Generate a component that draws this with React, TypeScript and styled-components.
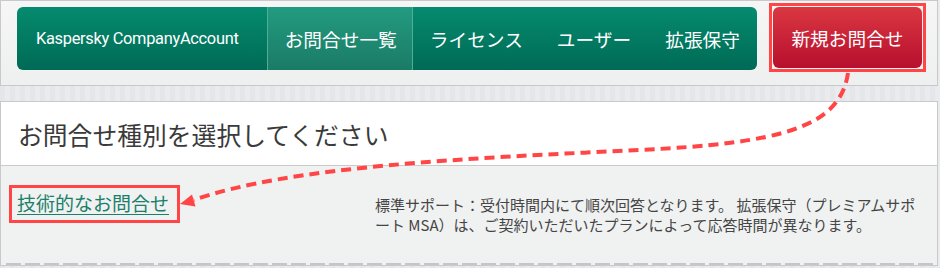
import * as React from 'react'
import styled, { createGlobalStyle } from 'styled-components'

const GlobalStyle = createGlobalStyle`
    html, body {
        margin: 0;
        padding: 0;
        background: #e8e9ec;
    }
    body {
        font-family: "Noto Sans CJK JP", "Noto Sans", sans-serif;
    }
`

const Page = styled.div`
    position: relative;
    width: 940px;
    height: 268px;
    overflow: hidden;
    background: repeating-linear-gradient(90deg, #e5e6ea 0 5px, #eaebee 5px 10px);
`

const HeaderPanel = styled.header`
    box-sizing: border-box;
    width: 938px;
    height: 86px;
    display: flex;
    align-items: flex-start;
    gap: 12px;
    padding: 6px 10px 0 16px;
    border: 1px solid #c9c9cb;
    background: linear-gradient(#f6f6f6, #eeefef);
`

const NavBar = styled.nav`
    display: flex;
    width: 740px;
    height: 63px;
    border-radius: 6px;
    overflow: hidden;
    background: linear-gradient(#058b6f, #006a55);
    color: #fff;
`

const Brand = styled.div`
    display: flex;
    align-items: center;
    width: 251px;
    padding-left: 19px;
    box-sizing: border-box;
    font-family: Roboto, "Liberation Sans", sans-serif;
    font-size: 16.4px;
    letter-spacing: -0.3px;
`

const NavItem = styled.div<{ $active?: boolean }>`
    display: flex;
    align-items: center;
    padding: 0 17px;
    font-size: 18.7px;
    white-space: nowrap;
    ${p => p.$active && `
        background: linear-gradient(#229b80, #1b7b65);
        border-left: 1px solid #4fae97;
        border-right: 1px solid #4fae97;
        padding: 0 15px 0 17px;
    `}
`

const Highlight = styled.div`
    border: 3px solid #ff4545;
    padding: 1px;
    margin-top: -4px;
    background: #f3f3f3;
`

const NewButton = styled.button`
    display: block;
    width: 149px;
    height: 61px;
    border: none;
    border-radius: 6px;
    background: linear-gradient(#da3741, #b70f2e);
    color: #fff;
    font-family: "Noto Sans CJK JP", sans-serif;
    font-size: 18.7px;
    cursor: pointer;
`

const ContentPanel = styled.section`
    box-sizing: border-box;
    width: 938px;
    margin-top: 15px;
    border: 1px solid #c9c9cb;
    background: #fff;
`

const Title = styled.h1`
    margin: 0;
    height: 63px;
    display: flex;
    align-items: center;
    padding-left: 17px;
    font-size: 24.8px;
    font-weight: 400;
    color: #3a3a3a;
    border-bottom: 1px solid #cacaca;
`

const Body = styled.div`
    display: grid;
    grid-template-columns: 366px 546px;
    align-items: start;
    height: 99px;
    box-sizing: border-box;
    padding: 19px 0 0 8px;
    background: #f0f1f1;
    position: relative;
`

const LinkBox = styled.div`
    justify-self: start;
    border: 3px solid #ff4545;
    padding: 1px 8px 3px 5px;
`

const TypeLink = styled.a`
    color: #1b7f6a;
    font-size: 19px;
    text-decoration: underline;
    text-underline-offset: 3px;
    line-height: 28px;
`

const Description = styled.p`
    margin: 10px 0 0;
    font-size: 15px;
    line-height: 19.5px;
    color: #454545;
`

const DashLine = styled.div`
    position: absolute;
    left: 5px;
    right: 0;
    bottom: 0;
    height: 2px;
    background: repeating-linear-gradient(90deg, #c6c6c6 0 15px, transparent 15px 19px);
`

const Overlay = styled.svg`
    position: absolute;
    left: 0;
    top: 0;
    pointer-events: none;
`

const App: React.FunctionComponent = () => (
    <Page>
        <GlobalStyle />
        <HeaderPanel>
            <NavBar>
                <Brand>Kaspersky CompanyAccount</Brand>
                <NavItem $active>お問合せ一覧</NavItem>
                <NavItem>ライセンス</NavItem>
                <NavItem>ユーザー</NavItem>
                <NavItem>拡張保守</NavItem>
            </NavBar>
            <Highlight>
                <NewButton>新規お問合せ</NewButton>
            </Highlight>
        </HeaderPanel>
        <ContentPanel>
            <Title>お問合せ種別を選択してください</Title>
            <Body>
                <LinkBox>
                    <TypeLink href="#">技術的なお問合せ</TypeLink>
                </LinkBox>
                <Description>
                    標準サポート：受付時間内にて順次回答となります。 拡張保守（プレミアムサポート MSA）は、ご契約いただいたプランによって応答時間が異なります。
                </Description>
                <DashLine />
            </Body>
        </ContentPanel>
        <Overlay width="940" height="268" viewBox="0 0 940 268">
            <path
                d="M848,73 C840,128 780,143 640,150 C470,158 290,166 194,200"
                fill="none"
                stroke="#ff4545"
                strokeWidth="4"
                strokeDasharray="10 6"
            />
            <polygon points="180,204 192,194.5 195.5,206.5" fill="#ff4545" />
        </Overlay>
    </Page>
)

export default App
